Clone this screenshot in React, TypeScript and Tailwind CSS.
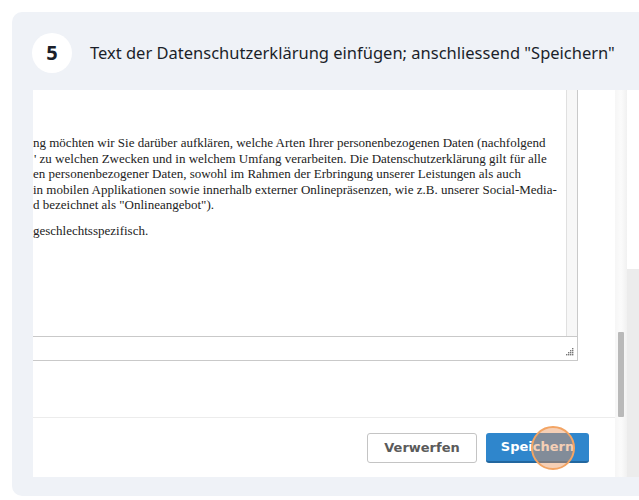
const lines: { text: string; indent: string }[] = [
  { text: "ng möchten wir Sie darüber aufklären, welche Arten Ihrer personenbezogenen Daten (nachfolgend", indent: "pl-[0px]" },
  { text: "' zu welchen Zwecken und in welchem Umfang verarbeiten. Die Datenschutzerklärung gilt für alle", indent: "pl-[1px]" },
  { text: "en personenbezogener Daten, sowohl im Rahmen der Erbringung unserer Leistungen als auch", indent: "pl-[0px]" },
  { text: "in mobilen Applikationen sowie innerhalb externer Onlinepräsenzen, wie z.B. unserer Social-Media-", indent: "pl-[0px]" },
  { text: "d bezeichnet als \"Onlineangebot\").", indent: "pl-[0px]" },
];

function ResizeGrip() {
  return (
    <svg width="8" height="8" viewBox="0 0 8 8" className="block">
      <rect x="6" y="0" width="1.4" height="1.4" fill="#777" />
      <rect x="4" y="2" width="1.4" height="1.4" fill="#777" />
      <rect x="6" y="2" width="1.4" height="1.4" fill="#777" />
      <rect x="2" y="4" width="1.4" height="1.4" fill="#777" />
      <rect x="4" y="4" width="1.4" height="1.4" fill="#777" />
      <rect x="6" y="4" width="1.4" height="1.4" fill="#777" />
      <rect x="0" y="6" width="1.4" height="1.4" fill="#777" />
      <rect x="2" y="6" width="1.4" height="1.4" fill="#777" />
      <rect x="4" y="6" width="1.4" height="1.4" fill="#777" />
      <rect x="6" y="6" width="1.4" height="1.4" fill="#777" />
    </svg>
  );
}

export default function App() {
  return (
    <div className="w-[639px] h-[500px] bg-white pt-[12px] pl-[12px] overflow-hidden">
      <div className="h-[484px] bg-[#eff2f7] rounded-l-[10px] flex flex-col">
        {/* Step header */}
        <div className="h-[78px] flex items-start pt-[21px] pl-[20px] gap-[18px]">
          <div className="w-[40px] h-[40px] rounded-full bg-white flex items-center justify-center font-['Noto_Sans',sans-serif] font-bold text-[20px] text-[#1b1f2a]">
            5
          </div>
          <div className="h-[40px] flex items-center font-['Noto_Sans',sans-serif] text-[16.5px] text-[#1b1f2a] whitespace-nowrap">
            Text der Datenschutzerklärung einfügen; anschliessend "Speichern"
          </div>
        </div>

        {/* Screenshot */}
        <div className="ml-[21px] h-[387px] bg-white flex">
          <div className="w-[582px] flex flex-col">
            <div className="h-[327px] flex flex-col">
              {/* Editor */}
              <div className="w-[545px] h-[271px] flex flex-col border-r border-[#c9c9c9] border-b">
                <div className="h-[247px] flex border-b border-[#c9c9c9]">
                  <div className="w-[534px] overflow-hidden pt-[45px] font-['Liberation_Serif',serif] text-[13px] leading-[15.5px] text-[#222]">
                    {lines.map((l, i) => (
                      <div key={i} className={`whitespace-nowrap ${l.indent}`}>
                        {l.text}
                      </div>
                    ))}
                    <div className="whitespace-nowrap mt-[10px]">geschlechtsspezifisch.</div>
                  </div>
                  <div className="w-[11px] bg-[#f7f7f7] border-l border-[#e0e0e0]" />
                </div>
                <div className="flex-1 flex items-end justify-end pr-[3px] pb-[4px]">
                  <ResizeGrip />
                </div>
              </div>
            </div>
            {/* Footer */}
            <div className="flex-1 border-t border-[#ececec] flex justify-end items-start pt-[15px] pr-[26px] gap-[9px]">
              <button className="w-[110px] h-[30px] rounded-[3px] border border-[#c4c4c4] bg-white font-['DejaVu_Sans',sans-serif] font-bold text-[13px] text-[#5a5a5a]">
                Verwerfen
              </button>
              <button className="relative w-[103px] h-[30px] rounded-[3px] bg-[#2f86cc] border-b-2 border-[#22679f] font-['DejaVu_Sans',sans-serif] font-bold text-[13px] text-white">
                Speichern
                <span className="absolute left-[45px] top-[-7px] w-[44px] h-[44px] rounded-full border-2 border-[#f3a463] bg-[#e8955a]/45" />
              </button>
            </div>
          </div>
          {/* Page scrollbar */}
          <div className="w-[12px] flex flex-col items-center bg-gradient-to-r from-[#f6f6f6] via-[#fbfbfb] to-[#f1f1f1]">
            <div className="h-[242px]" />
            <div className="w-[6px] h-[85px] bg-[#b9b9b9] rounded-[1px]" />
          </div>
          <div className="w-[12px] flex flex-col">
            <div className="h-[179px] bg-white" />
            <div className="flex-1 bg-[#ececec]" />
          </div>
        </div>
      </div>
    </div>
  );
}
